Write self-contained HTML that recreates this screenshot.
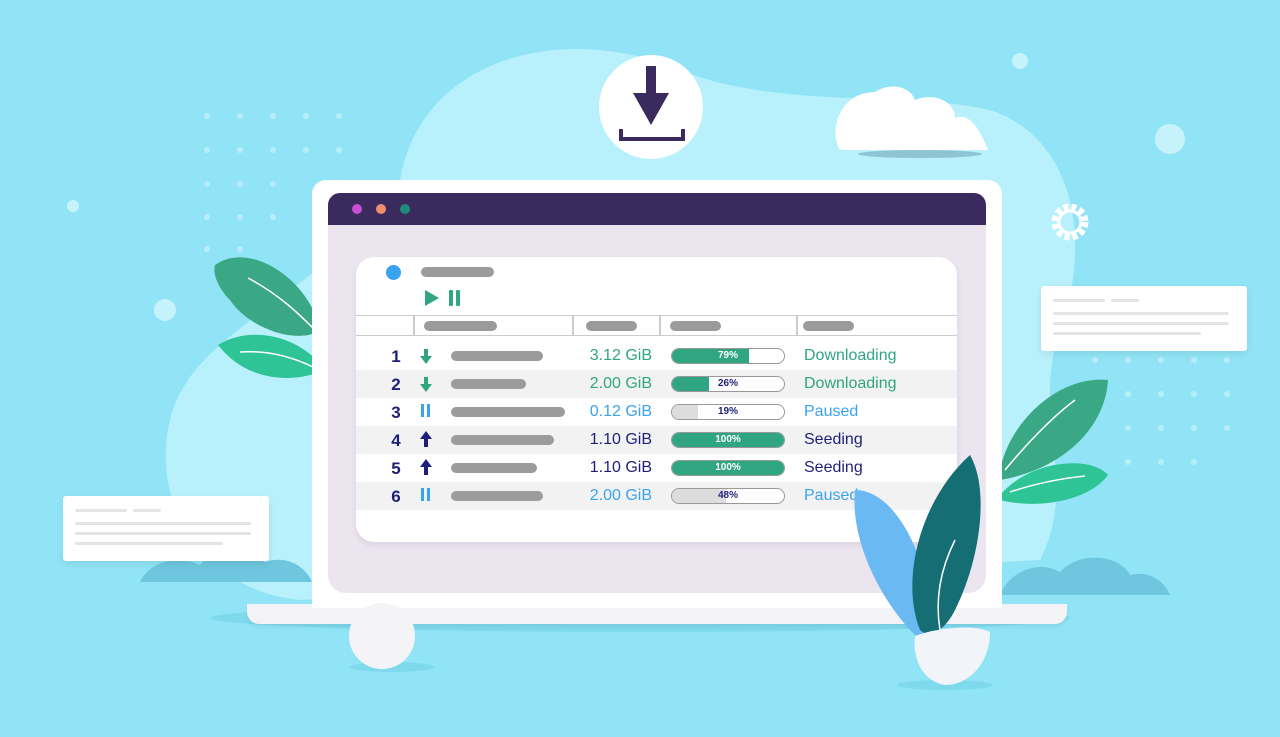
<!DOCTYPE html>
<html><head><meta charset="utf-8"><style>
*{margin:0;padding:0;box-sizing:border-box}
body{width:1280px;height:737px;overflow:hidden;background:#90e4f6;font-family:"Liberation Sans",sans-serif;position:relative}
.a{position:absolute}
.bar{position:absolute;height:10px;border-radius:5px;background:#9b9b9b}
.row{position:absolute;left:0;width:601px;height:28px}
.num{position:absolute;left:30px;width:20px;text-align:center;font-size:17px;font-weight:bold;color:#1f1f7a;top:5px}
.sz{position:absolute;right:305px;font-size:16px;top:5px}
.pb{position:absolute;left:315px;top:6px;width:114px;height:16px;border:1.5px solid #999;border-radius:8px;background:#fff;overflow:hidden;font-size:10px;font-weight:bold;color:#1f1f7a;text-align:center;line-height:13px}
.pb i{position:absolute;left:0;top:0;bottom:0}
.pb span{position:relative}
.st{position:absolute;left:448px;font-size:16px;top:5px}
.card{position:absolute;background:#fff;border-radius:3px;box-shadow:0 3px 8px rgba(0,0,0,.08)}
.ln{position:absolute;height:3px;background:#e6e2e8;border-radius:2px}
</style></head><body>
<svg class="a" style="left:0;top:0" width="1280" height="737">
<path d="M400 180 C420 60 560 20 680 70 C780 110 900 90 990 110 C1080 140 1090 250 1060 330 C1030 420 1080 480 1040 560 L300 600 C200 590 150 500 170 420 C190 330 320 300 400 180Z" fill="#b8f1fb"/>
<ellipse cx="640" cy="618" rx="430" ry="14" fill="#7fd9ec"/>
<path d="M140 582 C150 560 180 555 200 565 C215 545 250 548 265 562 C285 555 305 565 312 582Z" fill="#6ec7de"/>
<path d="M1000 595 C1010 570 1040 560 1060 572 C1080 550 1120 555 1130 575 C1150 570 1165 582 1170 595Z" fill="#6ec7de"/>
<g fill="#c6f3fb">
<circle cx="1020" cy="61" r="8"/><circle cx="1170" cy="139" r="15"/><circle cx="165" cy="310" r="11"/><circle cx="73" cy="206" r="6"/>
</g>
<g fill="#b8eefa">
<circle cx="207" cy="116" r="3"/><circle cx="240" cy="116" r="3"/><circle cx="273" cy="116" r="3"/><circle cx="306" cy="116" r="3"/><circle cx="339" cy="116" r="3"/>
<circle cx="207" cy="150" r="3"/><circle cx="240" cy="150" r="3"/><circle cx="273" cy="150" r="3"/><circle cx="306" cy="150" r="3"/><circle cx="339" cy="150" r="3"/>
<circle cx="207" cy="184" r="3"/><circle cx="240" cy="184" r="3"/><circle cx="273" cy="184" r="3"/>
<circle cx="207" cy="217" r="3"/><circle cx="240" cy="217" r="3"/><circle cx="273" cy="217" r="3"/>
<circle cx="207" cy="249" r="3"/><circle cx="240" cy="249" r="3"/>
<circle cx="1095" cy="360" r="3"/><circle cx="1128" cy="360" r="3"/><circle cx="1161" cy="360" r="3"/><circle cx="1194" cy="360" r="3"/><circle cx="1227" cy="360" r="3"/>
<circle cx="1128" cy="394" r="3"/><circle cx="1161" cy="394" r="3"/><circle cx="1194" cy="394" r="3"/><circle cx="1227" cy="394" r="3"/>
<circle cx="1128" cy="428" r="3"/><circle cx="1161" cy="428" r="3"/><circle cx="1194" cy="428" r="3"/><circle cx="1227" cy="428" r="3"/>
<circle cx="1128" cy="462" r="3"/><circle cx="1161" cy="462" r="3"/><circle cx="1194" cy="462" r="3"/>
</g>
<path d="M215 265 C250 240 310 280 320 330 C300 345 250 330 230 300 C220 290 212 275 215 265Z" fill="#3aa884"/>
<path d="M248 278 C280 295 300 315 315 330" stroke="#fff" stroke-width="1.5" fill="none"/>
<path d="M218 345 C250 325 300 335 325 370 C290 385 245 380 218 345Z" fill="#2fc496"/>
<path d="M240 352 C270 350 295 358 315 368" stroke="#fff" stroke-width="1.5" fill="none"/>
<path d="M1000 470 C1010 420 1060 375 1108 380 C1105 430 1060 470 1000 480Z" fill="#3aa884"/>
<path d="M1005 470 C1030 440 1055 415 1075 400" stroke="#fff" stroke-width="1.5" fill="none"/>
<path d="M1000 495 C1030 460 1090 455 1108 475 C1090 500 1040 510 1000 500Z" fill="#2fc496"/>
<path d="M1010 492 C1040 482 1065 478 1085 476" stroke="#fff" stroke-width="1.5" fill="none"/>
<ellipse cx="920" cy="154" rx="62" ry="4" fill="#8fc4d4"/>
<path d="M840 150 C828 130 840 92 875 92 C890 82 910 86 915 100 C935 92 955 102 955 118 C970 112 980 130 988 150Z" fill="#fff"/>
<circle cx="651" cy="107" r="52" fill="#fff"/>
<rect x="646" y="66" width="10" height="30" fill="#3b2a5e"/>
<path d="M633 93 L669 93 L651 125Z" fill="#3b2a5e"/>
<path d="M621 129 V139 H683 V129" stroke="#3b2a5e" stroke-width="4" fill="none"/>
<circle cx="1070" cy="222" r="15" fill="none" stroke="#fff" stroke-width="7" stroke-dasharray="5 3"/>
<circle cx="1070" cy="222" r="11" fill="none" stroke="#fff" stroke-width="3"/>
</svg>

<div class="a" style="left:247px;top:604px;width:820px;height:20px;background:#f3f2f6;border-radius:0 0 12px 12px;box-shadow:0 3px 4px rgba(0,0,0,.06)"></div>
<div class="a" style="left:312px;top:180px;width:690px;height:428px;background:#fff;border-radius:14px 14px 0 0"></div>
<div class="a" style="left:328px;top:193px;width:658px;height:400px;background:#ebe5ef;border-radius:12px 12px 18px 18px;overflow:hidden">
 <div style="height:32px;background:#3b2a5e"></div>
</div>
<div class="a" style="left:352px;top:204px;width:10px;height:10px;border-radius:5px;background:#c84fd1"></div>
<div class="a" style="left:376px;top:204px;width:10px;height:10px;border-radius:5px;background:#ef8d6e"></div>
<div class="a" style="left:400px;top:204px;width:10px;height:10px;border-radius:5px;background:#1e8a7a"></div>

<div class="a" style="left:356px;top:257px;width:601px;height:285px;background:#fff;border-radius:18px;box-shadow:0 3px 6px rgba(80,50,120,.1);overflow:hidden">
 <div class="a" style="left:30px;top:8px;width:15px;height:15px;border-radius:8px;background:#3aa3f0"></div>
 <div class="bar" style="left:65px;top:10px;width:73px"></div>
 <svg class="a" style="left:68px;top:32px" width="45" height="18"><path d="M1 1 L15 9 L1 17Z" fill="#2fa582"/><rect x="25" y="1" width="4" height="16" rx="1" fill="#2fa582"/><rect x="32" y="1" width="4" height="16" rx="1" fill="#2fa582"/></svg>
 <div class="a" style="left:0;top:58px;width:601px;height:21px;border-top:1.5px solid #ccc;border-bottom:1.5px solid #ccc"></div>
 <div class="a" style="left:57px;top:58px;width:1.5px;height:21px;background:#ccc"></div>
 <div class="a" style="left:216px;top:58px;width:1.5px;height:21px;background:#ccc"></div>
 <div class="a" style="left:303px;top:58px;width:1.5px;height:21px;background:#ccc"></div>
 <div class="a" style="left:440px;top:58px;width:1.5px;height:21px;background:#ccc"></div>
 <div class="bar" style="left:68px;top:64px;width:73px"></div>
 <div class="bar" style="left:230px;top:64px;width:51px"></div>
 <div class="bar" style="left:314px;top:64px;width:51px"></div>
 <div class="bar" style="left:447px;top:64px;width:51px"></div>

 <div class="row" style="top:85px">
  <div class="num">1</div><svg class="a" style="left:64px;top:7px" width="12" height="15"><rect x="4" y="0" width="4" height="8" fill="#2fa582"/><path d="M0 7 H12 L6 15Z" fill="#2fa582"/></svg>
  <div class="bar" style="left:95px;top:9px;width:92px"></div>
  <div class="sz" style="color:#2fa582">3.12 GiB</div>
  <div class="pb"><i style="width:69%;background:#2fa582"></i><span style="color:#fff">79%</span></div>
  <div class="st" style="color:#2fa582">Downloading</div></div>
 <div class="row" style="top:113px;background:#f2f2f2">
  <div class="num">2</div><svg class="a" style="left:64px;top:7px" width="12" height="15"><rect x="4" y="0" width="4" height="8" fill="#2fa582"/><path d="M0 7 H12 L6 15Z" fill="#2fa582"/></svg>
  <div class="bar" style="left:95px;top:9px;width:75px"></div>
  <div class="sz" style="color:#2fa582">2.00 GiB</div>
  <div class="pb"><i style="width:33%;background:#2fa582"></i><span>26%</span></div>
  <div class="st" style="color:#2fa582">Downloading</div></div>
 <div class="row" style="top:141px">
  <div class="num">3</div><svg class="a" style="left:64px;top:6px" width="12" height="14"><rect x="1" y="0" width="3" height="13" fill="#3aa3f0"/><rect x="7" y="0" width="3" height="13" fill="#3aa3f0"/></svg>
  <div class="bar" style="left:95px;top:9px;width:114px"></div>
  <div class="sz" style="color:#3aa3f0">0.12 GiB</div>
  <div class="pb"><i style="width:23%;background:#ddd"></i><span>19%</span></div>
  <div class="st" style="color:#3aa3f0">Paused</div></div>
 <div class="row" style="top:169px;background:#f2f2f2">
  <div class="num">4</div><svg class="a" style="left:64px;top:5px" width="12" height="16"><path d="M0 8 H12 L6 0Z" fill="#1f1f7a"/><rect x="4" y="7" width="4" height="9" fill="#1f1f7a"/></svg>
  <div class="bar" style="left:95px;top:9px;width:103px"></div>
  <div class="sz" style="color:#1f1f7a">1.10 GiB</div>
  <div class="pb"><i style="width:100%;background:#2fa582"></i><span style="color:#fff">100%</span></div>
  <div class="st" style="color:#1f1f7a">Seeding</div></div>
 <div class="row" style="top:197px">
  <div class="num">5</div><svg class="a" style="left:64px;top:5px" width="12" height="16"><path d="M0 8 H12 L6 0Z" fill="#1f1f7a"/><rect x="4" y="7" width="4" height="9" fill="#1f1f7a"/></svg>
  <div class="bar" style="left:95px;top:9px;width:86px"></div>
  <div class="sz" style="color:#1f1f7a">1.10 GiB</div>
  <div class="pb"><i style="width:100%;background:#2fa582"></i><span style="color:#fff">100%</span></div>
  <div class="st" style="color:#1f1f7a">Seeding</div></div>
 <div class="row" style="top:225px;background:#f2f2f2">
  <div class="num">6</div><svg class="a" style="left:64px;top:6px" width="12" height="14"><rect x="1" y="0" width="3" height="13" fill="#3aa3f0"/><rect x="7" y="0" width="3" height="13" fill="#3aa3f0"/></svg>
  <div class="bar" style="left:95px;top:9px;width:92px"></div>
  <div class="sz" style="color:#3aa3f0">2.00 GiB</div>
  <div class="pb"><i style="width:48%;background:#ddd"></i><span>48%</span></div>
  <div class="st" style="color:#3aa3f0">Paused</div></div>
</div>

<div class="card" style="left:63px;top:496px;width:206px;height:65px">
 <div class="ln" style="left:12px;top:13px;width:52px"></div><div class="ln" style="left:70px;top:13px;width:28px"></div>
 <div class="ln" style="left:12px;top:26px;width:176px"></div><div class="ln" style="left:12px;top:36px;width:176px"></div><div class="ln" style="left:12px;top:46px;width:148px"></div>
</div>
<div class="card" style="left:1041px;top:286px;width:206px;height:65px">
 <div class="ln" style="left:12px;top:13px;width:52px"></div><div class="ln" style="left:70px;top:13px;width:28px"></div>
 <div class="ln" style="left:12px;top:26px;width:176px"></div><div class="ln" style="left:12px;top:36px;width:176px"></div><div class="ln" style="left:12px;top:46px;width:148px"></div>
</div>

<svg class="a" style="left:0;top:0" width="1280" height="737">
<ellipse cx="392" cy="667" rx="42" ry="5" fill="#7fd9ec"/>
<circle cx="382" cy="636" r="33" fill="#f4f4f7"/>
<ellipse cx="945" cy="685" rx="48" ry="5" fill="#7fd9ec"/>
<path d="M855 490 C890 490 920 540 930 600 C935 630 925 640 915 635 C880 600 850 540 855 490Z" fill="#6ab9f2"/>
<path d="M970 455 C990 490 980 560 955 610 C945 630 930 640 920 630 C900 580 920 500 970 455Z" fill="#146e74"/>
<path d="M955 540 C940 570 935 600 940 630" stroke="#fff" stroke-width="1.5" fill="none"/>
<path d="M915 636 C935 628 975 624 990 632 C990 662 970 685 945 685 C925 682 912 662 915 636Z" fill="#f1f4f8"/>
</svg>
</body></html>
